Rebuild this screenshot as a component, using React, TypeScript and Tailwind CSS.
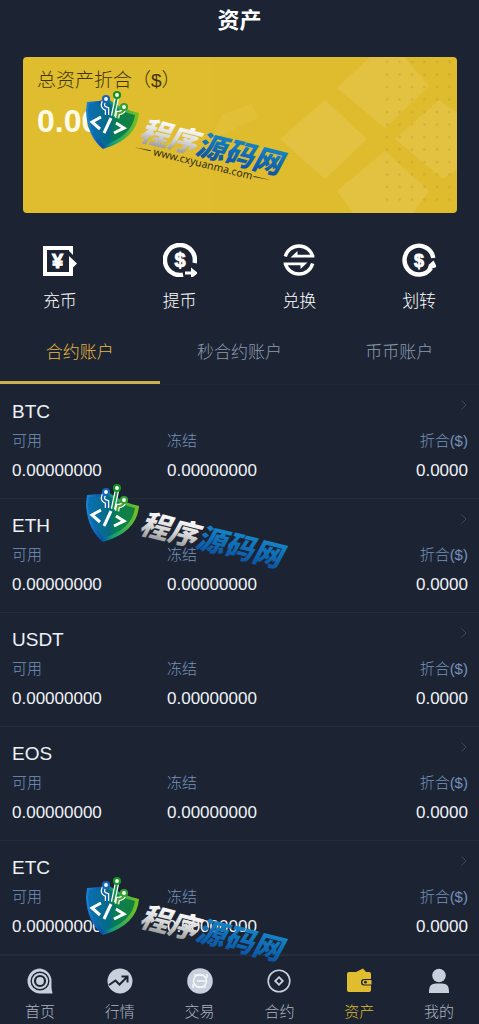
import { clsx } from "clsx";
import { useId, useState } from "react";
import type { ReactNode } from "react";

const ACCOUNT_TABS = ["合约账户", "秒合约账户", "币币账户"];
const COINS = ["BTC", "ETH", "USDT", "EOS", "ETC"];

function DepositIcon() {
  return (
    <svg viewBox="0 0 34 34" className="size-[34px]" fill="currentColor">
      <path d="M0 3H30V12L26 8V7H4V29H26V13L34 20.5L30 24.5V33H0Z" />
      <text
        x="14.5"
        y="25"
        fontSize="20"
        fontWeight="700"
        textAnchor="middle"
        stroke="currentColor"
        strokeWidth="1"
      >
        ¥
      </text>
    </svg>
  );
}

function WithdrawIcon() {
  return (
    <svg viewBox="0 0 34 34" className="size-[34px]" fill="currentColor">
      <path
        d="M31.6 20A15 15 0 1 0 20 31.7"
        fill="none"
        stroke="currentColor"
        strokeWidth="4.5"
      />
      <path d="M22 28.5H28V24.5L35 30L28 35.5V31.5H22Z" />
      <text
        x="17"
        y="24"
        fontSize="20"
        fontWeight="700"
        textAnchor="middle"
        stroke="currentColor"
        strokeWidth="0.8"
      >
        $
      </text>
    </svg>
  );
}

function ConvertIcon() {
  return (
    <svg viewBox="0 0 34 34" className="size-[34px]" fill="currentColor">
      <g fill="none" stroke="currentColor" strokeWidth="3.4">
        <path d="M3.3 13.5A14.2 14.2 0 0 1 30.7 13.5" />
        <path d="M3.3 20.5A14.2 14.2 0 0 0 30.7 20.5" />
      </g>
      <path d="M8.5 14.5L15.5 8V11.8H32L32.5 14.5Z" />
      <path d="M25.5 19.5L18.5 26V22.2H2L1.5 19.5Z" />
    </svg>
  );
}

function TransferIcon() {
  return (
    <svg viewBox="0 0 34 34" className="size-[34px]" fill="currentColor">
      <path
        d="M31.2 15A14.4 14.4 0 1 0 29 25"
        fill="none"
        stroke="currentColor"
        strokeWidth="4.4"
      />
      <path d="M31.5 17.5L35 24L25 27L27 21.5Z" />
      <text
        x="17"
        y="23.5"
        fontSize="18"
        fontWeight="700"
        textAnchor="middle"
        stroke="currentColor"
        strokeWidth="0.8"
      >
        $
      </text>
    </svg>
  );
}

function HomeIcon() {
  return (
    <svg viewBox="0 0 26 26" className="size-[26px]">
      <path
        d="M13 .5A12.5 12.5 0 0 0 13 25.5H25.5L24.5 20V13A12.5 12.5 0 0 0 13 .5Z"
        fill="#c8d0de"
      />
      <g fill="none" stroke="#1c2434">
        <circle cx="13" cy="13" r="8.8" strokeWidth="1.4" />
        <circle cx="13" cy="13" r="5" strokeWidth="2.2" />
      </g>
    </svg>
  );
}

function MarketIcon() {
  return (
    <svg viewBox="0 0 26 26" className="size-[26px]">
      <circle cx="13" cy="13" r="12.5" fill="#c8d0de" />
      <path
        d="M2 17L8.5 12.5L12.5 16.5L20 9M14.5 8.5H20.5V14.5"
        fill="none"
        stroke="#1c2434"
        strokeWidth="2"
      />
    </svg>
  );
}

function TradeIcon() {
  return (
    <svg viewBox="0 0 26 26" className="size-[26px]">
      <circle cx="13" cy="13" r="12.8" fill="#c8d0de" />
      <g fill="none" stroke="#f4f6f9" strokeWidth="1.5">
        <path d="M7 7H14A6 6 0 0 1 19 11M19 19H12A6 6 0 0 1 7 15" />
        <circle cx="13" cy="13" r="6.5" />
        <path d="M10 13H19M6 20V16M20 6V10" />
      </g>
    </svg>
  );
}

function ContractIcon() {
  return (
    <svg
      viewBox="0 0 26 26"
      className="size-[26px]"
      fill="none"
      stroke="#c8d0de"
    >
      <circle cx="13" cy="13" r="10.8" strokeWidth="1.6" />
      <path d="M13 9.2L16.8 13L13 16.8L9.2 13Z" strokeWidth="1.8" />
    </svg>
  );
}

function WalletIcon() {
  return (
    <svg viewBox="0 0 26 26" className="size-[26px]">
      <path
        d="M1 6Q1 4 3 4H10L17 .5L20 4H23Q25 4 25 6V11H18Q15 11 15 14.2Q15 17.5 18 17.5H25V22Q25 24 23 24H3Q1 24 1 22Z"
        fill="#dfbd2e"
      />
      <path
        d="M18.5 12H25.5V16.5H18.5Q16.5 16.5 16.5 14.2Q16.5 12 18.5 12Z"
        fill="#dfbd2e"
      />
      <circle cx="19.5" cy="14.2" r="1.4" fill="#1c2434" />
    </svg>
  );
}

function ProfileIcon() {
  return (
    <svg viewBox="0 0 26 26" className="size-[26px]" fill="#c8d0de">
      <circle cx="13" cy="7.5" r="6.8" />
      <path d="M3 25V22.5Q3 15.5 10 15.5H16Q23 15.5 23 22.5V25Z" />
    </svg>
  );
}

interface WatermarkProps {
  className: string;
  url?: string;
}

function Watermark({ className, url }: WatermarkProps) {
  const id = useId();
  const shield = `${id}-shield`;
  const rim = `${id}-rim`;
  const silver = `${id}-silver`;
  const blue = `${id}-blue`;
  return (
    <svg
      viewBox="0 0 220 100"
      className={clsx("pointer-events-none absolute h-[100px] w-[220px]", className)}
    >
      <defs>
        <linearGradient id={shield} x1="0" x2="1">
          <stop offset="0" stopColor="#0b6fb4" />
          <stop offset=".45" stopColor="#056a83" />
          <stop offset=".6" stopColor="#08804f" />
          <stop offset="1" stopColor="#16803c" />
        </linearGradient>
        <linearGradient id={rim} x1="0" x2="1">
          <stop offset="0" stopColor="#1688d8" />
          <stop offset=".3" stopColor="#0a50a8" />
          <stop offset=".5" stopColor="#10a078" />
          <stop offset="1" stopColor="#79c31c" />
        </linearGradient>
        <linearGradient id={silver} x1="0" y1="0" x2="0" y2="1">
          <stop offset="0" stopColor="#ffffff" />
          <stop offset=".5" stopColor="#d8d8d8" />
          <stop offset="1" stopColor="#8c8c8c" />
        </linearGradient>
        <linearGradient id={blue} x1="0" y1="0" x2="0" y2="1">
          <stop offset="0" stopColor="#1687c9" />
          <stop offset="1" stopColor="#0b4f9e" />
        </linearGradient>
      </defs>

      <path
        d="M12 17Q23 17 33 14Q46 24 64 28Q62 54 28 64Q12 51 11 26Z"
        fill={`url(#${rim})`}
      />
      <path
        d="M14 19Q24 19 33 17Q45 27 60 30Q57 51 29 60Q15 48 13 27Z"
        fill={`url(#${shield})`}
      />
      <g fill="none" stroke="#ffffff" strokeWidth="4.5">
        <path d="M30 15Q25 22 32 24V30M42 12L38 31M49 23Q49 28 43 28L42 33" />
      </g>
      <g fill="none" strokeWidth="2">
        <path d="M30 15Q25 22 32 24V30" stroke="#1764b0" />
        <path d="M42 12L38 31" stroke="#159447" />
        <path d="M49 23Q49 28 43 28L42 33" stroke="#4ba32c" />
      </g>
      <g fill="#ffffff" strokeWidth="2.2">
        <circle cx="31" cy="14" r="3" stroke="#1764b0" />
        <circle cx="42" cy="10" r="3" stroke="#159422" />
        <circle cx="49" cy="22" r="3" stroke="#379e32" />
      </g>
      <g fill="none" stroke="#ffffff" strokeWidth="3">
        <path d="M26 32L17 37L25 44M36 33L29 48M41 38L49 43L39 48" />
      </g>

      <g transform="rotate(14 64 56)" fontWeight="900" fontStyle="italic" fontSize="29">
        <text x="63" y="55" fill={`url(#${silver})`}>
          程序
        </text>
        <text x="121" y="55" fill={`url(#${blue})`}>
          源码网
        </text>
      </g>
      {url && (
        <g transform="rotate(14 78 69)" fill="#2d2a16">
          <text x="78" y="70" fontSize="10.5" fontFamily="Noto Sans, sans-serif">
            {url}
          </text>
          <path d="M58 67L75 66V67ZM181 66L199 66L181 67Z" />
        </g>
      )}
    </svg>
  );
}

function CardPattern() {
  return (
    <svg
      viewBox="0 0 250 156"
      className="absolute inset-y-0 right-0 h-full w-[250px]"
    >
      <defs>
        <pattern id="dots" width="12.5" height="12.5" patternUnits="userSpaceOnUse">
          <circle cx="5" cy="5" r="1.4" fill="#b89a2c" />
        </pattern>
      </defs>
      <g fill="#e5c54a" opacity=".7">
        <path d="M163 0H197L222 29L178 71L130 31Z" />
        <path d="M118 43L160 82L118 122L73 82Z" />
        <path d="M232 43L250 56V112L236 122L188 82Z" />
        <path d="M178 94L222 134L206 156H146L130 134Z" />
        <path d="M15 57L45 47L51 61L5 82Z" opacity=".5" />
      </g>
      <rect x="170" width="75" height="150" fill="url(#dots)" opacity=".4" />
    </svg>
  );
}

const ACTIONS: { label: string; icon: ReactNode }[] = [
  { label: "充币", icon: <DepositIcon /> },
  { label: "提币", icon: <WithdrawIcon /> },
  { label: "兑换", icon: <ConvertIcon /> },
  { label: "划转", icon: <TransferIcon /> },
];

const NAV_ITEMS: { label: string; icon: ReactNode; active?: boolean }[] = [
  { label: "首页", icon: <HomeIcon /> },
  { label: "行情", icon: <MarketIcon /> },
  { label: "交易", icon: <TradeIcon /> },
  { label: "合约", icon: <ContractIcon /> },
  { label: "资产", icon: <WalletIcon />, active: true },
  { label: "我的", icon: <ProfileIcon /> },
];

function BalanceCard() {
  return (
    <section className="relative mt-4 mr-[22px] ml-[23px] min-h-[156px] overflow-hidden rounded bg-[#dfbd2e] px-[14px] pt-[10px]">
      <CardPattern />
      <h2 className="relative text-[19px] leading-7 font-light text-[#3f3408]">
        总资产折合（$）
      </h2>
      <p className="relative mt-2 text-[32px] leading-9 font-bold text-[#fffbe6]">
        0.00
      </p>
    </section>
  );
}

function CoinRow({ coin }: { coin: string }) {
  return (
    <li className="border-b border-[#232d3e]">
      <a href={`#${coin}`} className="block pt-[14px] pr-[11px] pb-[13px] pl-3">
        <div className="flex items-start justify-between">
          <h3 className="text-[19px] leading-[26px] text-[#eef1f5]">{coin}</h3>
          <svg
            viewBox="0 0 8 12"
            className="h-3 w-2 text-[#3d485a]"
            fill="none"
            stroke="currentColor"
          >
            <path d="M1.5 1.5L6 6L1.5 10.5" />
          </svg>
        </div>
        <dl className="grid grid-cols-[34%_33%_33%] text-[17px] leading-7 text-[#f0f2f5]">
          <div>
            <dt className="text-[15px] leading-8 font-light text-[#7792ba]">可用</dt>
            <dd>0.00000000</dd>
          </div>
          <div>
            <dt className="text-[15px] leading-8 font-light text-[#7792ba]">冻结</dt>
            <dd>0.00000000</dd>
          </div>
          <div className="text-right">
            <dt className="text-[15px] leading-8 font-light text-[#7792ba]">折合($)</dt>
            <dd>0.0000</dd>
          </div>
        </dl>
      </a>
    </li>
  );
}

export default function App() {
  const [activeTab, setActiveTab] = useState(0);

  return (
    <div className="relative flex min-h-screen flex-col overflow-hidden bg-[#1c2434] font-['Liberation_Sans','Noto_Sans_CJK_SC',sans-serif] text-white">
      <header className="flex h-[41px] items-center justify-center">
        <h1 className="text-[22px] leading-8 font-bold">资产</h1>
      </header>

      <main className="flex-1">
        <BalanceCard />

        <div className="mt-[30px] grid grid-cols-4">
          {ACTIONS.map(({ label, icon }) => (
            <button
              key={label}
              type="button"
              className="flex flex-col items-center gap-[13px] text-[17px] leading-6 font-light text-white"
            >
              {icon}
              {label}
            </button>
          ))}
        </div>

        <div role="tablist" className="mt-[14px] grid grid-cols-3">
          {ACCOUNT_TABS.map((tab, i) => (
            <button
              key={tab}
              type="button"
              role="tab"
              aria-selected={i === activeTab}
              onClick={() => setActiveTab(i)}
              className={clsx(
                "h-14 border-b-[3px] pb-[3px] text-[17px] font-light",
                i === activeTab
                  ? "border-[#cdb04e] text-[#e8ba40]"
                  : "border-transparent text-[#8c9bb0]",
              )}
            >
              {tab}
            </button>
          ))}
        </div>

        <ul className="border-t border-[#1f2939]">
          {COINS.map((coin) => (
            <CoinRow key={coin} coin={coin} />
          ))}
        </ul>
      </main>

      <nav className="grid grid-cols-6 border-t border-[#232d3e] pt-3 pb-[2px]">
        {NAV_ITEMS.map(({ label, icon, active }) => (
          <a
            key={label}
            href={`#${label}`}
            className={clsx(
              "flex flex-col items-center gap-[7px] text-[15px] leading-[22px] font-light",
              active ? "text-[#dfbd2e]" : "text-[#adb5c2]",
            )}
          >
            {icon}
            {label}
          </a>
        ))}
      </nav>

      <Watermark className="top-[85px] left-[75px]" url="www.cxyuanma.com" />
      <Watermark className="top-[478px] left-[75px]" />
      <Watermark className="top-[871px] left-[75px]" />
    </div>
  );
}
